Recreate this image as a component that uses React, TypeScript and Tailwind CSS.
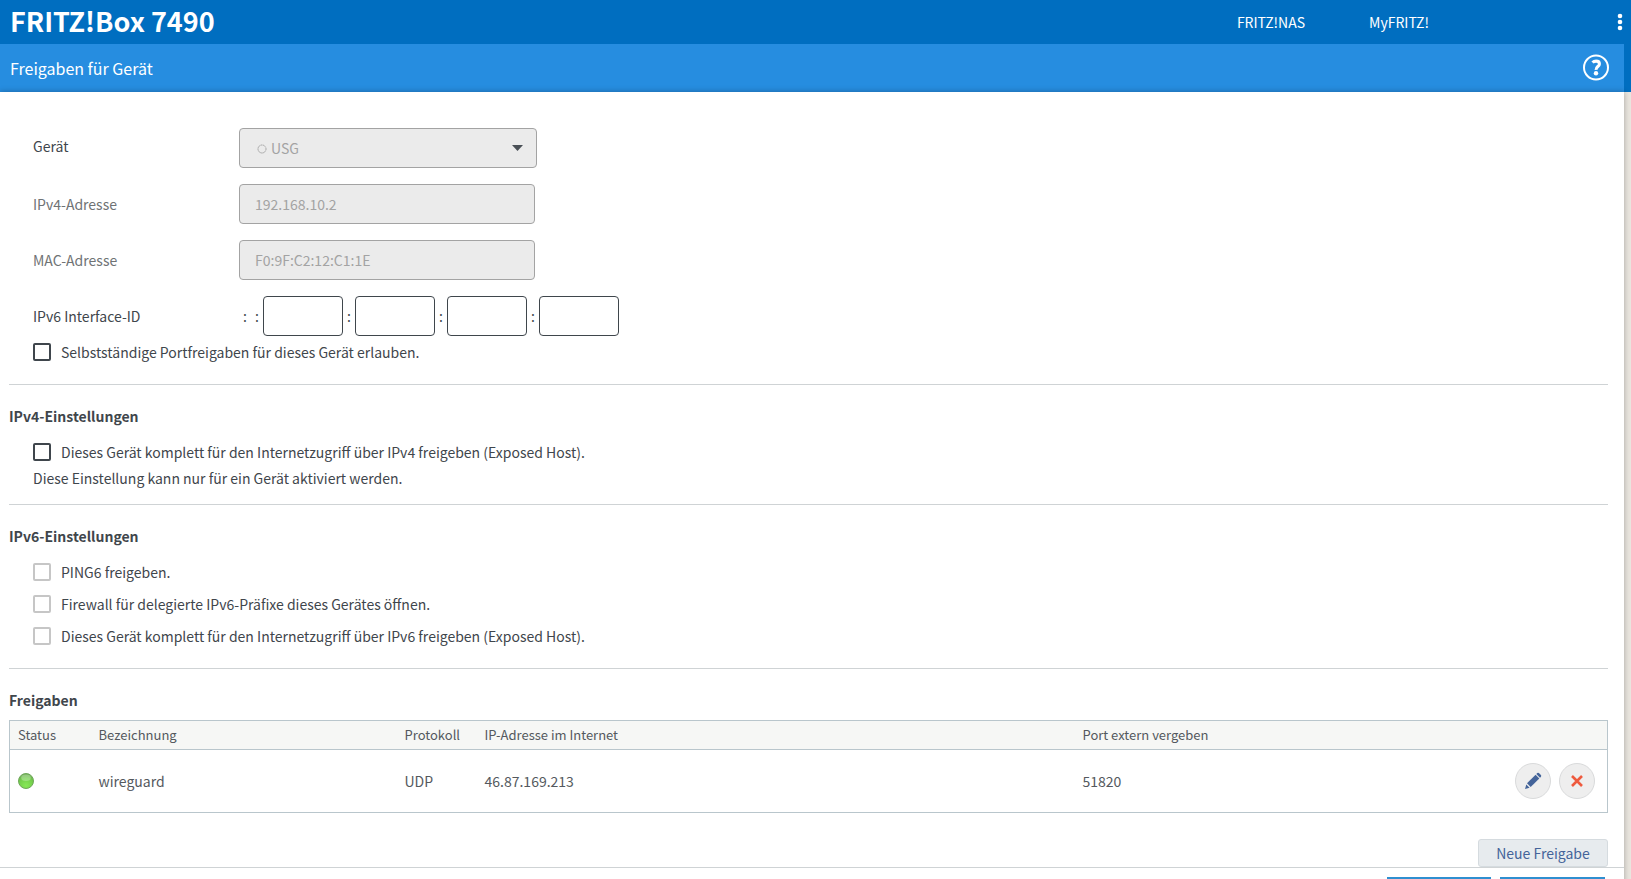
import type { ReactNode } from "react";

function Check({ id, disabled, children }: { id: string; disabled?: boolean; children: ReactNode }) {
  return (
    <div className="flex h-6 items-center gap-2.5">
      <input
        id={id}
        type="checkbox"
        disabled={disabled}
        className="size-[18px] appearance-none rounded-xs border-2 border-[#3f464c] bg-white checked:bg-[#3f464c] disabled:border-[#c6c6c6]"
      />
      <label htmlFor={id}>{children}</label>
    </div>
  );
}

function Rule() {
  return <hr className="border-[#cfd3d5]" />;
}

function ReadonlyRow({ id, label, value }: { id: string; label: string; value: string }) {
  return (
    <div className="flex items-center">
      <label htmlFor={id} className="w-[206px] text-[#6f7375]">
        {label}
      </label>
      <input
        id={id}
        disabled
        defaultValue={value}
        className="h-10 w-[296px] rounded border border-[#a3a3a3] bg-[#ebebeb] px-[15px] text-[#a3a3a3]"
      />
    </div>
  );
}

const idParts = [1, 2, 3, 4];

export default function App() {
  return (
    <div className="flex h-screen flex-col overflow-hidden bg-[#eae6df] font-['Noto_Sans_CJK_SC',sans-serif] text-sm leading-6 text-[#3f464c]">
      <header className="flex h-11 shrink-0 items-center bg-[#006ec0] pl-2.5 text-white">
        <h1 className="flex-1 pb-0.5 text-[27px] leading-10 font-bold">FRITZ!Box 7490</h1>
        <nav className="flex gap-16">
          <a href="#nas">FRITZ!NAS</a>
          <a href="#myfritz">MyFRITZ!</a>
        </nav>
        <button aria-label="Menü" className="ml-[180px] flex w-[22px] justify-center">
          <svg width="6" height="20" viewBox="0 0 6 20" fill="currentColor">
            <circle cx="3" cy="4" r="2.3" />
            <circle cx="3" cy="10" r="2.3" />
            <circle cx="3" cy="16" r="2.3" />
          </svg>
        </button>
      </header>

      <div className="shrink-0 bg-[#006ec0] pr-[7px]">
        <div className="flex h-12 items-center justify-between bg-[#268de0] pr-[15px] pl-2.5 text-white">
          <h2 className="text-base">Freigaben für Gerät</h2>
          <button aria-label="Hilfe">
            <svg width="26" height="28" viewBox="0 0 26 28" fill="none" stroke="currentColor">
              <circle cx="13" cy="13.5" r="12" strokeWidth="2" />
              <path d="M9.500 8.500c1-1 2.200-1.400 3.600-1.400 2.100 0 3.300 1.100 3.300 2.800 0 2.700-3.600 2.700-3.300 5.900" strokeWidth="3.100" />
              <circle cx="13" cy="19.300" r="2.200" fill="currentColor" stroke="none" />
            </svg>
          </button>
        </div>
      </div>

      <div className="flex-1 pr-[7px]">
        <div className="h-full bg-white shadow-[0_0_6px_rgba(0,0,0,0.3)]">
          <main className="pt-9 pr-4 pl-[9px]">
            <section className="pl-6">
              <div className="flex flex-col gap-4">
                <div className="flex items-center">
                  <label htmlFor="device" className="w-[206px] pb-1">
                    Gerät
                  </label>
                  <div className="relative">
                    <select
                      id="device"
                      disabled
                      className="h-10 w-[298px] appearance-none rounded border border-[#a3a3a3] bg-[#ebebeb] pr-8 pl-[31px] text-[#a3a3a3] opacity-100"
                    >
                      <option>USG</option>
                    </select>
                    <svg
                      className="pointer-events-none absolute top-4 left-[18px]"
                      width="10"
                      height="10"
                      viewBox="0 0 10 10"
                      fill="none"
                      stroke="#a3a3a3"
                      strokeDasharray="1.6 0.5"
                    >
                      <circle cx="5" cy="5" r="4" />
                    </svg>
                    <svg className="pointer-events-none absolute top-[17px] right-3.5" width="11" height="6" viewBox="0 0 11 6" fill="#4a5056">
                      <path d="M0 0h11L5.500 6z" />
                    </svg>
                  </div>
                </div>
                <ReadonlyRow id="ipv4" label="IPv4-Adresse" value="192.168.10.2" />
                <ReadonlyRow id="mac" label="MAC-Adresse" value="F0:9F:C2:12:C1:1E" />
                <fieldset className="flex items-center">
                  <legend className="float-left w-[206px]">IPv6 Interface-ID</legend>
                  <span className="w-3 text-center">:</span>
                  {idParts.map((n) => (
                    <div key={n} className="flex items-center">
                      <span className="w-3 text-center">:</span>
                      <input
                        aria-label={`IPv6 Interface-ID ${n}`}
                        className="h-10 w-20 rounded border border-[#3f464c] bg-white px-2"
                      />
                    </div>
                  ))}
                </fieldset>
              </div>
              <div className="pt-1 pb-5">
                <Check id="auto">Selbstständige Portfreigaben für dieses Gerät erlauben.</Check>
              </div>
            </section>

            <Rule />
            <section className="pt-[19px] pb-3.5">
              <h3 className="font-bold">IPv4-Einstellungen</h3>
              <div className="pt-3 pl-6">
                <Check id="exposed4">Dieses Gerät komplett für den Internetzugriff über IPv4 freigeben (Exposed Host).</Check>
                <p className="pt-0.5">Diese Einstellung kann nur für ein Gerät aktiviert werden.</p>
              </div>
            </section>

            <Rule />
            <section className="pt-[19px] pb-5">
              <h3 className="font-bold">IPv6-Einstellungen</h3>
              <div className="flex flex-col gap-2 pt-3 pl-6">
                <Check id="ping6" disabled>PING6 freigeben.</Check>
                <Check id="prefix" disabled>Firewall für delegierte IPv6-Präfixe dieses Gerätes öffnen.</Check>
                <Check id="exposed6" disabled>Dieses Gerät komplett für den Internetzugriff über IPv6 freigeben (Exposed Host).</Check>
              </div>
            </section>

            <Rule />
            <section className="pt-[19px]">
              <h3 className="pb-2 font-bold">Freigaben</h3>
              <table className="w-full table-fixed border border-[#b9c6cc] text-left text-[#54595e]">
                <thead>
                  <tr className="h-[29px] border-b border-[#b9c6cc] bg-[#f6f7f5] text-[13px] [&>th]:p-0 [&>th]:pl-2 [&>th]:font-normal">
                    <th className="w-[81px]">Status</th>
                    <th className="w-[306px]">Bezeichnung</th>
                    <th className="w-20">Protokoll</th>
                    <th>IP-Adresse im Internet</th>
                    <th className="w-[408px]">Port extern vergeben</th>
                    <th className="w-[125px]" aria-label="Aktionen"></th>
                  </tr>
                </thead>
                <tbody>
                  <tr className="h-[63px] [&>td]:p-0 [&>td]:pl-2">
                    <td>
                      <svg width="16" height="16" viewBox="0 0 16 16" className="block">
                        <defs>
                          <radialGradient id="led" cx="0.5" cy="0.8" r="0.8">
                            <stop offset="0" stopColor="#86e856" />
                            <stop offset="0.6" stopColor="#74cf4c" />
                            <stop offset="1" stopColor="#6aa653" />
                          </radialGradient>
                        </defs>
                        <circle cx="8" cy="8" r="7.500" fill="url(#led)" stroke="#6fa85a" />
                        <ellipse cx="8" cy="4.800" rx="4.800" ry="3.200" fill="#ffffff" opacity="0.28" />
                      </svg>
                    </td>
                    <td>wireguard</td>
                    <td>UDP</td>
                    <td>46.87.169.213</td>
                    <td>51820</td>
                    <td>
                      <div className="flex justify-end gap-2 pr-3">
                        <button aria-label="Bearbeiten" className="grid size-9 place-items-center rounded-full border border-[#d9dadb] bg-[#eeeeee]">
                          <svg width="18" height="18" viewBox="0 0 18 18" fill="#44649a">
                            <path d="M1 17l1.300-4.600 3.300 3.300z" />
                            <path d="M3 11.300L11.600 2.700l3.700 3.700L6.700 15z" />
                            <path d="M12.300 2l1-1q.8-.6 1.600.1l2 2q.7.8.1 1.600l-1 1z" />
                          </svg>
                        </button>
                        <button aria-label="Löschen" className="grid size-9 place-items-center rounded-full border border-[#d9dadb] bg-[#eeeeee]">
                          <svg width="12" height="12" viewBox="0 0 12 12" stroke="#ee5a3e" strokeWidth="2.600">
                            <path d="M1 1l10 10M11 1L1 11" />
                          </svg>
                        </button>
                      </div>
                    </td>
                  </tr>
                </tbody>
              </table>
              <div className="flex justify-end pt-[26px]">
                <button className="h-7 w-[130px] rounded-[3px] border border-[#d5dbdf] bg-[#e7ebee] text-[#44649a]">Neue Freigabe</button>
              </div>
            </section>
          </main>
          <footer className="flex justify-end gap-[9px] border-t border-[#cfd3d5] pt-[9px] pr-[19px]">
            <button aria-label="OK" className="h-9 w-[104px] bg-[#2f8fd0]"></button>
            <button aria-label="Abbrechen" className="h-9 w-[105px] bg-[#2f8fd0]"></button>
          </footer>
        </div>
      </div>
    </div>
  );
}
